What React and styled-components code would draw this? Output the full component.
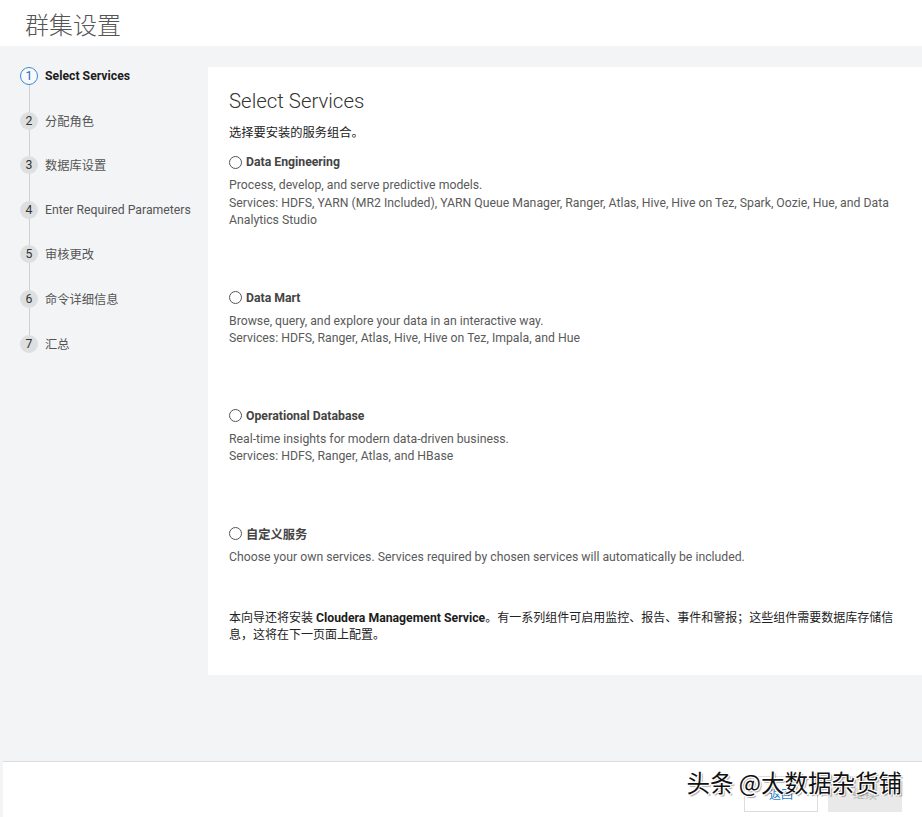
import React from "react";
import styled, { createGlobalStyle } from "styled-components";

const GlobalStyle = createGlobalStyle`
  html, body {
    margin: 0;
    padding: 0;
  }
  body {
    font-family: Roboto, "Noto Sans CJK SC", sans-serif;
    color: #333;
    background: #fff;
  }
  * { box-sizing: border-box; }
`;

const steps = [
  "Select Services",
  "分配角色",
  "数据库设置",
  "Enter Required Parameters",
  "审核更改",
  "命令详细信息",
  "汇总",
];

const options = [
  {
    title: "Data Engineering",
    lines: [
      "Process, develop, and serve predictive models.",
      "Services: HDFS, YARN (MR2 Included), YARN Queue Manager, Ranger, Atlas, Hive, Hive on Tez, Spark, Oozie, Hue, and Data Analytics Studio",
    ],
  },
  {
    title: "Data Mart",
    lines: [
      "Browse, query, and explore your data in an interactive way.",
      "Services: HDFS, Ranger, Atlas, Hive, Hive on Tez, Impala, and Hue",
    ],
  },
  {
    title: "Operational Database",
    lines: [
      "Real-time insights for modern data-driven business.",
      "Services: HDFS, Ranger, Atlas, and HBase",
    ],
  },
  {
    title: "自定义服务",
    lines: [
      "Choose your own services. Services required by chosen services will automatically be included.",
    ],
  },
];

const App = () => {
  return (
    <Page>
      <GlobalStyle />
      <Header>
        <PageTitle>群集设置</PageTitle>
      </Header>
      <Body>
        <Sidebar>
          <StepList>
            <StepLine />
            {steps.map((s, i) => (
              <Step key={s}>
                <StepNum active={i === 0}>{i + 1}</StepNum>
                <StepLabel active={i === 0}>{s}</StepLabel>
              </Step>
            ))}
          </StepList>
        </Sidebar>
        <Card>
          <CardTitle>Select Services</CardTitle>
          <Intro>选择要安装的服务组合。</Intro>
          {options.map((o, i) => (
            <Option key={o.title} last={i === options.length - 1}>
              <RadioRow>
                <Radio />
                <OptionTitle>{o.title}</OptionTitle>
              </RadioRow>
              <OptionDesc>
                {o.lines.map((l) => (
                  <div key={l}>{l}</div>
                ))}
              </OptionDesc>
            </Option>
          ))}
          <Note>
            本向导还将安装 <b>Cloudera Management Service</b>。有一系列组件可启用监控、报告、事件和警报；这些组件需要数据库存储信息，这将在下一页面上配置。
          </Note>
        </Card>
      </Body>
      <Footer>
        <Button>返回</Button>
        <Button primary>继续</Button>
        <Watermark>头条 @大数据杂货铺</Watermark>
      </Footer>
    </Page>
  );
};

export default App;

const Page = styled.div`
  height: 100vh;
  display: flex;
  flex-direction: column;
  background: #f3f4f6;
`;

const Header = styled.header`
  height: 46px;
  background: #fff;
  padding-left: 25px;
  display: flex;
  align-items: center;
`;

const PageTitle = styled.h1`
  margin: 0;
  font-size: 24px;
  font-weight: 300;
  color: #555;
`;

const Body = styled.main`
  flex: 1;
  display: flex;
  align-items: flex-start;
  padding-top: 21px;
`;

const Sidebar = styled.nav`
  width: 208px;
  flex-shrink: 0;
`;

const StepList = styled.ol`
  position: relative;
  list-style: none;
  margin: 0;
  padding: 0 0 0 20px;
  display: flex;
  flex-direction: column;
  gap: 26.6px;
`;

const StepLine = styled.span`
  position: absolute;
  left: 28.5px;
  top: 9px;
  bottom: 9px;
  width: 1px;
  background: #cfd0d2;
`;

const Step = styled.li`
  display: flex;
  align-items: center;
  height: 18px;
  gap: 7px;
`;

const StepNum = styled.span`
  position: relative;
  width: 18px;
  height: 18px;
  border-radius: 50%;
  display: flex;
  align-items: center;
  justify-content: center;
  font-size: 12.25px;
  color: ${(p) => (p.active ? "#1f6fb8" : "#333")};
  background: ${(p) => (p.active ? "#f7f9fb" : "#dedfe0")};
  border: ${(p) => (p.active ? "1.5px solid #3a8ad6" : "none")};
`;

const StepLabel = styled.span`
  font-size: 12.25px;
  color: ${(p) => (p.active ? "#1c1c1c" : "#555")};
  font-weight: ${(p) => (p.active ? 700 : 400)};
`;

const Card = styled.section`
  flex: 1;
  background: #fff;
  padding: 22px 21px 30px;
`;

const CardTitle = styled.h2`
  margin: 0 0 11px;
  font-size: 20.4px;
  line-height: 24px;
  font-weight: 300;
  color: #333;
`;

const Intro = styled.p`
  margin: 0 0 11px;
  font-size: 12.25px;
  line-height: 18px;
  color: #222;
`;

const Option = styled.div`
  margin-bottom: ${(p) => (p.last ? "43.5px" : "59px")};
`;

const RadioRow = styled.label`
  display: flex;
  align-items: center;
  gap: 4px;
  height: 18px;
`;

const Radio = styled.span`
  width: 13px;
  height: 13px;
  border-radius: 50%;
  border: 1px solid #555;
  background: #fff;
`;

const OptionTitle = styled.span`
  font-size: 12.25px;
  font-weight: 700;
  color: #444;
`;

const OptionDesc = styled.div`
  margin-top: 6px;
  font-size: 12.25px;
  line-height: 17.5px;
  color: #5a5a5a;
`;

const Note = styled.p`
  margin: 0;
  font-size: 12px;
  line-height: 17.5px;
  color: #222;

  b {
    font-size: 12.25px;
    font-weight: 700;
    color: #1c1c1c;
  }
`;

const Footer = styled.footer`
  position: relative;
  height: 56px;
  margin-left: 3px;
  background: #fff;
  border-top: 1px solid #dcdde0;
  display: flex;
  justify-content: flex-end;
  align-items: center;
  gap: 10px;
  padding: 0 20px;
`;

const Button = styled.button`
  width: 74px;
  height: 36px;
  font-family: Roboto, "Noto Sans CJK SC", sans-serif;
  font-size: 12px;
  border-radius: 0;
  border: ${(p) => (p.primary ? "none" : "1px solid #dcdcdc")};
  background: ${(p) => (p.primary ? "#e9e9e9" : "#fff")};
  color: ${(p) => (p.primary ? "#b5b5b5" : "#2d7fc7")};
  margin-top: 8px;
`;

const Watermark = styled.span`
  position: absolute;
  right: 20px;
  top: 3px;
  font-family: "Noto Sans CJK SC", sans-serif;
  font-size: 23.5px;
  color: #111;
  pointer-events: none;
  text-shadow:
    1px 1px 0 #fff, -1px -1px 0 #fff, 1px -1px 0 #fff, -1px 1px 0 #fff,
    2px 2px 1px rgba(0, 0, 0, 0.35);
`;
